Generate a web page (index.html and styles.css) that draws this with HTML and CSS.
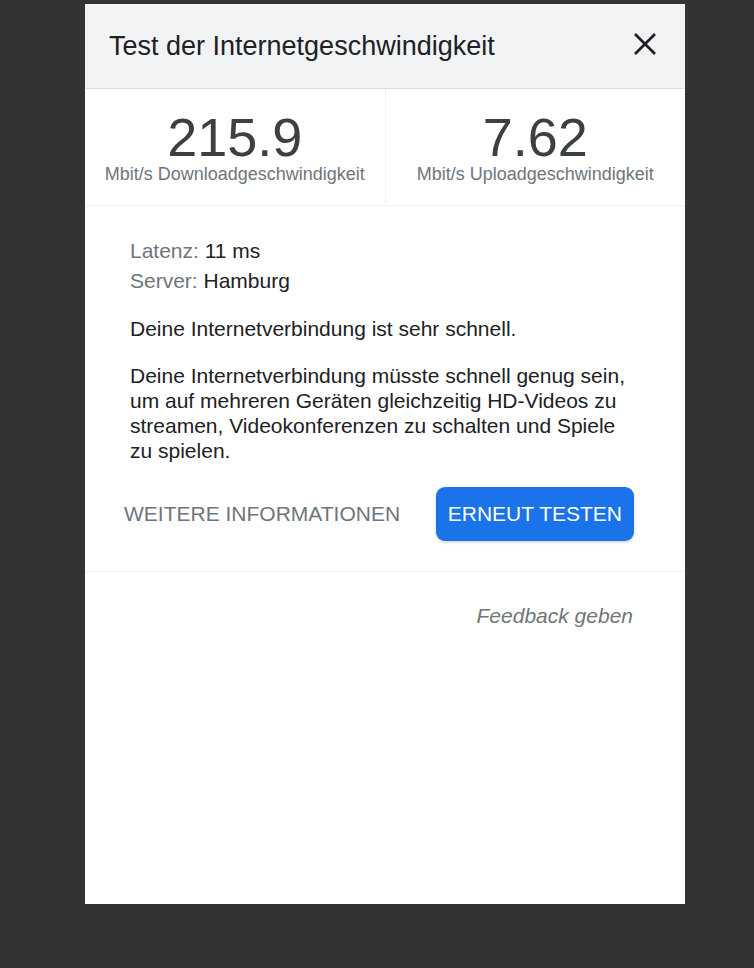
FILE: index.html
```html
<!DOCTYPE html>
<html lang="de">
<head>
<meta charset="utf-8">
<title>Test der Internetgeschwindigkeit</title>
<link rel="stylesheet" href="styles.css">
</head>
<body>
<div class="dialog">
  <div class="header">
    <div class="title">Test der Internetgeschwindigkeit</div>
    <div class="close" aria-label="Schließen">
      <svg width="24" height="22" viewBox="0 0 24 22"><path d="M2 1 L22 21 M22 1 L2 21" stroke="#202124" stroke-width="2.8" fill="none"/></svg>
    </div>
  </div>
  <div class="stats">
    <div class="stat">
      <div class="num">215.9</div>
      <div class="unit">Mbit/s Downloadgeschwindigkeit</div>
    </div>
    <div class="stat">
      <div class="num">7.62</div>
      <div class="unit">Mbit/s Uploadgeschwindigkeit</div>
    </div>
  </div>
  <div class="body">
    <div class="meta"><span class="lbl">Latenz:</span> 11 ms</div>
    <div class="meta"><span class="lbl">Server:</span> Hamburg</div>
    <p class="msg">Deine Internetverbindung ist sehr schnell.</p>
    <p class="desc">Deine Internetverbindung müsste schnell genug sein, um auf mehreren Geräten gleichzeitig HD-Videos zu streamen, Videokonferenzen zu schalten und Spiele zu spielen.</p>
    <div class="actions">
      <span class="more">WEITERE INFORMATIONEN</span>
      <span class="retry">ERNEUT TESTEN</span>
    </div>
  </div>
  <div class="footer">
    <span class="feedback">Feedback geben</span>
  </div>
</div>
</body>
</html>
```
FILE: styles.css
```css
html, body {
  margin: 0;
  padding: 0;
  background: #333333;
  font-family: "Liberation Sans", Arial, sans-serif;
}
.dialog {
  width: 600px;
  height: 900px;
  margin: 4px 0 0 85px;
  background: #ffffff;
  display: flex;
  flex-direction: column;
}
.header {
  height: 84px;
  flex: none;
  background: #f1f3f4;
  border-bottom: 1px solid #dadce0;
  display: flex;
  align-items: center;
  justify-content: space-between;
  padding: 0 28px 0 24px;
}
.title {
  font-size: 27px;
  color: #202124;
}
.close {
  display: flex;
  margin-top: -4px;
}
.stats {
  display: flex;
  flex: none;
  height: 116px;
  border-bottom: 1px solid #f1f1f1;
}
.stat {
  flex: 1;
  text-align: center;
  padding-top: 22px;
}
.stat + .stat {
  border-left: 1px solid #f1f1f1;
}
.num {
  font-size: 54px;
  line-height: 53px;
  color: #3c4043;
}
.unit {
  font-size: 18px;
  line-height: 20px;
  color: #70757a;
}
.body {
  flex: none;
  padding: 30px 51px 0 45px;
  font-size: 21px;
  color: #202124;
  height: 366px;
  border-bottom: 1px solid #f1f1f1;
  box-sizing: border-box;
}
.meta {
  line-height: 30px;
}
.lbl {
  color: #70757a;
}
.msg {
  margin: 20px 0 0 0;
  line-height: 25px;
}
.desc {
  margin: 22px 0 0 0;
  line-height: 25px;
}
.actions {
  display: flex;
  justify-content: space-between;
  align-items: center;
  margin-top: 24px;
  margin-left: -6px;
}
.more {
  font-size: 21px;
  color: #70757a;
}
.retry {
  font-size: 21px;
  color: #ffffff;
  background: #1a73e8;
  border-radius: 9px;
  padding: 15px 12px;
  line-height: 24px;
  box-shadow: 0 1px 3px rgba(60,64,67,0.3);
}
.footer {
  display: flex;
  justify-content: flex-end;
  padding: 32px 52px 0 0;
}
.feedback {
  font-size: 21px;
  font-style: italic;
  color: #70757a;
}
```
